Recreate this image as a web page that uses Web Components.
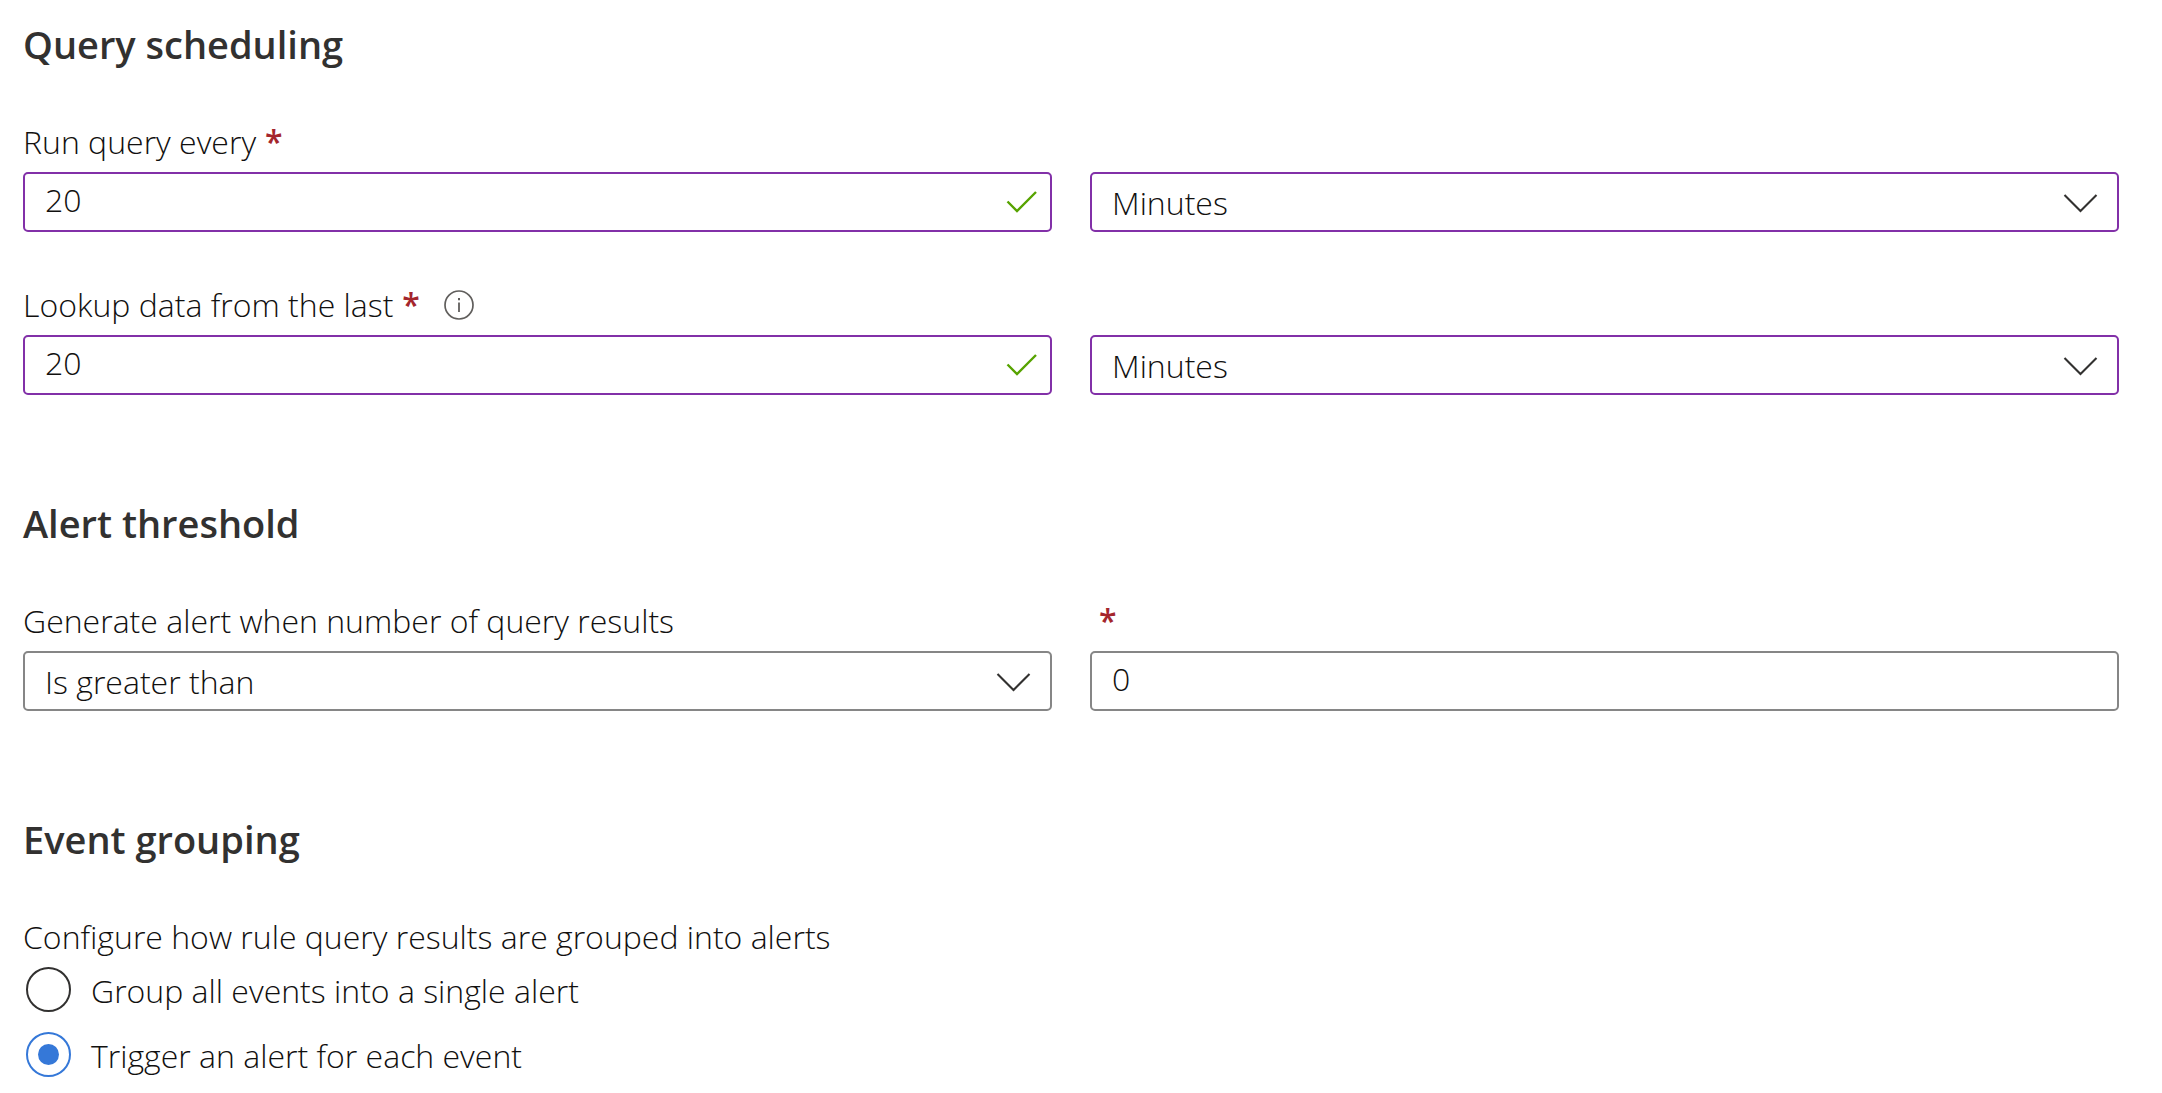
<!DOCTYPE html>
<html lang="en">
<head>
<meta charset="utf-8">
<meta name="viewport" content="width=device-width, initial-scale=1">
<title>Set rule logic</title>
<style>
  body {
    margin: 0;
    background: #fff;
    color: #11100f;
    font: 300 32px/46px "Open Sans", "Noto Sans", sans-serif;
    --heading: #323130;
    --accent: #8230a8;
    --neutral: #868686;
    --required: #a4262c;
    --valid: #57a300;
    --selected: #3578d8;
  }
</style>
</head>
<body>
<rule-form>
  <form-section heading="Query scheduling">
    <field-row>
      <text-field label="Run query every" value="20" required valid></text-field>
      <select-field name="Run query unit" options="Minutes,Hours,Days" edited></select-field>
    </field-row>
    <field-row>
      <text-field label="Lookup data from the last" value="20" required valid info></text-field>
      <select-field name="Lookup unit" options="Minutes,Hours,Days" edited></select-field>
    </field-row>
  </form-section>
  <form-section heading="Alert threshold">
    <field-row>
      <select-field label="Generate alert when number of query results" options="Is greater than,Is fewer than,Is equal to,Is not equal to"></select-field>
      <text-field name="Threshold" value="0" required></text-field>
    </field-row>
  </form-section>
  <form-section heading="Event grouping">
    <radio-group label="Configure how rule query results are grouped into alerts" options="Group all events into a single alert,Trigger an alert for each event" selected="1"></radio-group>
  </form-section>
</rule-form>

<script>
class RuleForm extends HTMLElement {
  constructor() {
    super();
    this.attachShadow({ mode: "open" }).innerHTML = `
      <style>
        :host { display: block; padding: 16px 43px 16px 23px; }
        form { display: flex; flex-direction: column; gap: 100px; }
      </style>
      <form><slot></slot></form>`;
  }
}

class FormSection extends HTMLElement {
  connectedCallback() {
    this.attachShadow({ mode: "open" }).innerHTML = `
      <style>
        :host { display: block; }
        h2 { margin: 0 0 47px; font-size: 38px; line-height: 56px; font-weight: 600; color: var(--heading); }
        .rows { display: flex; flex-direction: column; gap: 50px; }
      </style>
      <h2>${this.getAttribute("heading")}</h2>
      <div class="rows"><slot></slot></div>`;
  }
}

class FieldRow extends HTMLElement {
  constructor() {
    super();
    this.attachShadow({ mode: "open" }).innerHTML = `
      <style>
        :host { display: grid; grid-template-columns: 1fr 1fr; gap: 38px; align-items: end; }
      </style>
      <slot></slot>`;
  }
}

const fieldStyle = `
  :host { display: flex; flex-direction: column; gap: 7px; min-width: 0; }
  .label { display: flex; align-items: center; height: 46px; white-space: pre; }
  .star { color: var(--required); font-weight: 600; margin-left: 9px; }
  .info { width: 30px; height: 30px; margin-left: 24px; }
  .box { position: relative; display: block; }
  input, select {
    appearance: none; box-sizing: border-box; display: block; width: 100%; height: 60px;
    margin: 0; border: 2px solid var(--neutral); border-radius: 5px; background: #fff;
    color: inherit; font: inherit; outline: none;
  }
  input { padding: 0 64px 6px 20px; }
  select { padding: 2px 64px 0 20px; }
  :host([valid]) input, :host([edited]) select { border-color: var(--accent); }
  .mark { position: absolute; top: 0; height: 60px; pointer-events: none; }
  .check { right: 13px; width: 34px; }
  .chevron { right: 21px; width: 35px; }`;

const infoIcon = `
  <svg class="info" viewBox="0 0 30 30" role="img" aria-label="More information" fill="none" stroke="#605e5c">
    <circle cx="15" cy="15" r="14" stroke-width="1.7"/>
    <path d="M15 12.5V22" stroke-width="1.8"/><path d="M15 8v2.2" stroke-width="2"/>
  </svg>`;

function fieldLabel(el) {
  const text = el.getAttribute("label") || "";
  if (!text && !el.hasAttribute("required")) return "";
  return `<div class="label"><label for="field">${text}${
    el.hasAttribute("required") ? `<span class="star">*</span>` : ""
  }</label>${el.hasAttribute("info") ? infoIcon : ""}</div>`;
}

function fieldName(el) {
  return el.hasAttribute("name") ? `aria-label="${el.getAttribute("name")}"` : "";
}

class TextField extends HTMLElement {
  connectedCallback() {
    this.attachShadow({ mode: "open" }).innerHTML = `
      <style>${fieldStyle}</style>
      ${fieldLabel(this)}
      <div class="box">
        <input id="field" type="text" inputmode="numeric" value="${this.getAttribute("value")}" ${fieldName(this)}>
        ${this.hasAttribute("valid") ? `
        <svg class="mark check" viewBox="0 0 34 60" fill="none" stroke="#57a300" stroke-width="2.4" aria-hidden="true">
          <path d="M2.5 29.5L12 39L31 20"/>
        </svg>` : ""}
      </div>`;
  }
}

class SelectField extends HTMLElement {
  connectedCallback() {
    const options = this.getAttribute("options").split(",");
    this.attachShadow({ mode: "open" }).innerHTML = `
      <style>${fieldStyle}</style>
      ${fieldLabel(this)}
      <div class="box">
        <select id="field" ${fieldName(this)}>${options.map(o => `<option>${o}</option>`).join("")}</select>
        <svg class="mark chevron" viewBox="0 0 35 60" fill="none" stroke="#323130" stroke-width="2.1" aria-hidden="true">
          <path d="M1.5 23L17.5 39L33.5 23"/>
        </svg>
      </div>`;
  }
}

class RadioGroup extends HTMLElement {
  connectedCallback() {
    const selected = Number(this.getAttribute("selected"));
    const options = this.getAttribute("options").split(",");
    this.attachShadow({ mode: "open" }).innerHTML = `
      <style>
        :host { display: block; }
        fieldset { border: 0; margin: 0; padding: 0; min-width: 0; }
        legend { padding: 0; margin-bottom: 7px; }
        .options { display: flex; flex-direction: column; gap: 20px; padding-left: 3px; }
        .option { display: flex; align-items: center; gap: 20px; height: 45px; }
        label { padding-top: 2px; }
        input {
          appearance: none; flex: none; box-sizing: border-box; width: 45px; height: 45px; margin: 0;
          border: 2px solid #323130; border-radius: 50%; display: grid; place-items: center;
        }
        input:checked { border-color: var(--selected); }
        input:checked::before {
          content: ""; width: 21px; height: 21px; border-radius: 50%; background: var(--selected);
        }
      </style>
      <fieldset>
        <legend>${this.getAttribute("label")}</legend>
        <div class="options">${options.map((o, i) => `
          <div class="option">
            <input type="radio" name="grouping" id="option${i}" ${i === selected ? "checked" : ""}>
            <label for="option${i}">${o}</label>
          </div>`).join("")}
        </div>
      </fieldset>`;
  }
}

customElements.define("rule-form", RuleForm);
customElements.define("form-section", FormSection);
customElements.define("field-row", FieldRow);
customElements.define("text-field", TextField);
customElements.define("select-field", SelectField);
customElements.define("radio-group", RadioGroup);
</script>
</body>
</html>
